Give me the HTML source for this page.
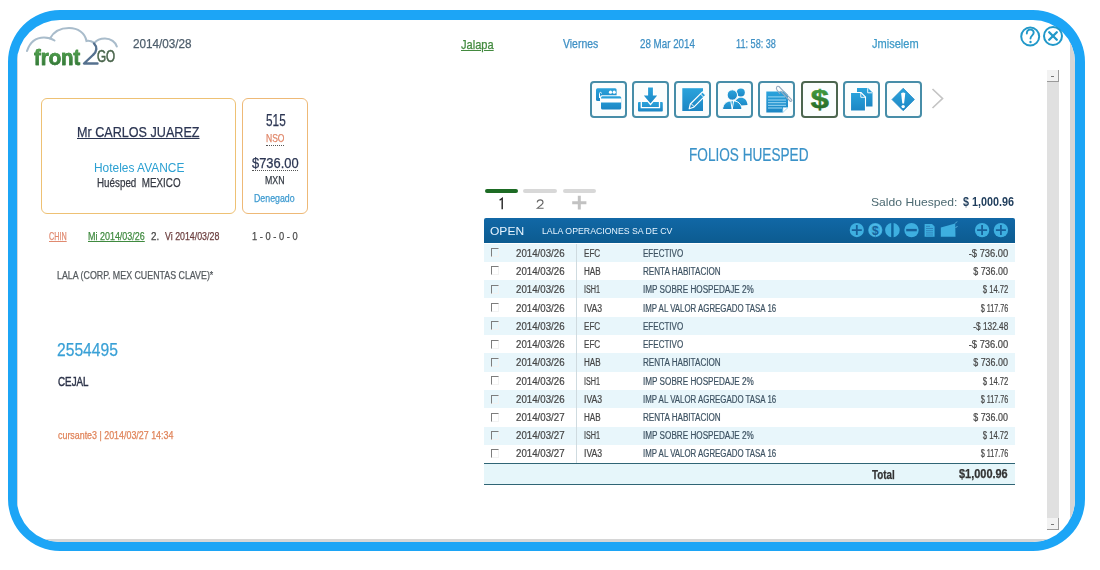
<!DOCTYPE html>
<html><head><meta charset="utf-8"><style>
html,body{margin:0;padding:0;background:#fff;width:1100px;height:570px;overflow:hidden;position:relative;font-family:"Liberation Sans",sans-serif}
.t{position:absolute;white-space:nowrap;line-height:1;transform-origin:0 0;font-family:"Liberation Sans",sans-serif}
.rt{font-size:10.00px;-webkit-text-stroke-width:0.2px}
.d{-webkit-text-stroke-width:0.25px}
.frame{position:absolute;left:7.5px;top:10px;width:1077px;height:541px;box-sizing:border-box;border:10px solid #1ca5f6;border-left-width:9.5px;border-right-width:10.5px;border-bottom-width:9px;border-radius:52px;overflow:hidden;background:#fff}
.inner{position:absolute;left:0;top:0;right:0;bottom:0;border-left:1.5px solid #d5d8dc;border-right:5px solid #d6d6d6;border-bottom:3.5px solid #d6d6d6}
.card{position:absolute;border:1.5px solid #f0b45a;border-radius:6px;box-sizing:border-box;background:#fff}
.btn{position:absolute;top:81px;width:37px;height:37px;box-sizing:border-box;border:2px solid #478da8;border-radius:4px;background:#fbfdfd}
.row{position:absolute;left:484px;width:531px;height:18.3px}
.cb{position:absolute;left:491px;width:8px;height:9px;border-top:1.2px solid #7d7d7d;border-left:1.2px solid #7d7d7d;border-right:1px solid #f2f2f2;border-bottom:1px solid #f2f2f2;box-sizing:border-box}
</style></head><body>
<div class="frame"><div class="inner"></div></div>
<div class="card" style="left:40.8px;top:98px;width:195.2px;height:115.5px;border-color:#eec174"></div>
<div class="card" style="left:242.3px;top:98px;width:65.5px;height:115.5px;border-color:#eeb977"></div>
<div style="position:absolute;left:266px;top:144.8px;width:18px;border-top:1px dotted #555"></div>
<div style="position:absolute;left:252px;top:170.2px;width:46px;border-top:1px dotted #555"></div>
<!-- scrollbar -->
<div style="position:absolute;left:1046.5px;top:70px;width:12.5px;height:459px;background:#e0e0e0"></div>
<div style="position:absolute;left:1046.5px;top:70px;width:12.5px;height:12px;box-sizing:border-box;background:#f2f2f2;border-right:1px solid #9a9a9a;border-bottom:1px solid #9a9a9a"></div>
<div style="position:absolute;left:1046.5px;top:517.5px;width:12.5px;height:12px;box-sizing:border-box;background:#f2f2f2;border-right:1px solid #9a9a9a;border-bottom:1px solid #9a9a9a"></div>
<div style="position:absolute;left:1051px;top:76px;width:3px;height:1px;background:#777"></div>
<div style="position:absolute;left:1051px;top:523.5px;width:3px;height:1px;background:#777"></div>
<!-- tabs -->
<div style="position:absolute;left:484.5px;top:189px;width:33px;height:3.7px;background:#1d6b24;border-radius:2px"></div>
<div style="position:absolute;left:523px;top:189px;width:34px;height:3.7px;background:#d8d8d8;border-radius:2px"></div>
<div style="position:absolute;left:563px;top:189px;width:33px;height:3.7px;background:#d8d8d8;border-radius:2px"></div>
<!-- table header -->
<div style="position:absolute;left:484px;top:217.8px;width:531px;height:25.2px;background:linear-gradient(#1168a6,#0c5b90);border-radius:2px 2px 0 0"></div>
<div class="row" style="top:243.50px;background:#e8f6fb"></div>
<div class="cb" style="top:248.10px"></div>
<div class="t rt" style="left:516.42px;top:248.84px;transform:scaleX(0.970);color:#454545">2014/03/26</div>
<div class="t rt" style="left:584.25px;top:248.84px;transform:scaleX(0.810);color:#454545">EFC</div>
<div class="t rt" style="left:643.16px;top:248.84px;transform:scaleX(0.804);color:#3d5262">EFECTIVO</div>
<div class="t rt" style="right:91.80px;top:248.84px;transform:scaleX(0.935);transform-origin:100% 0;color:#454545">-$ 736.00</div>
<div class="row" style="top:261.80px;background:#ffffff"></div>
<div class="cb" style="top:266.40px"></div>
<div class="t rt" style="left:516.42px;top:267.08px;transform:scaleX(0.970);color:#454545">2014/03/26</div>
<div class="t rt" style="left:584.25px;top:267.08px;transform:scaleX(0.809);color:#454545">HAB</div>
<div class="t rt" style="left:643.15px;top:267.08px;transform:scaleX(0.811);color:#3d5262">RENTA HABITACION</div>
<div class="t rt" style="right:91.80px;top:267.08px;transform:scaleX(0.892);transform-origin:100% 0;color:#454545">$ 736.00</div>
<div class="row" style="top:280.10px;background:#e8f6fb"></div>
<div class="cb" style="top:284.70px"></div>
<div class="t rt" style="left:516.42px;top:285.32px;transform:scaleX(0.970);color:#454545">2014/03/26</div>
<div class="t rt" style="left:584.25px;top:285.32px;transform:scaleX(0.724);color:#454545">ISH1</div>
<div class="t rt" style="left:643.07px;top:285.32px;transform:scaleX(0.815);color:#3d5262">IMP SOBRE HOSPEDAJE 2%</div>
<div class="t rt" style="right:91.80px;top:285.32px;transform:scaleX(0.765);transform-origin:100% 0;color:#454545">$ 14.72</div>
<div class="row" style="top:298.40px;background:#ffffff"></div>
<div class="cb" style="top:303.00px"></div>
<div class="t rt" style="left:516.42px;top:303.56px;transform:scaleX(0.970);color:#454545">2014/03/26</div>
<div class="t rt" style="left:584.12px;top:303.56px;transform:scaleX(0.864);color:#454545">IVA3</div>
<div class="t rt" style="left:643.09px;top:303.56px;transform:scaleX(0.788);color:#3d5262">IMP AL VALOR AGREGADO TASA 16</div>
<div class="t rt" style="right:91.80px;top:303.56px;transform:scaleX(0.721);transform-origin:100% 0;color:#454545">$ 117.76</div>
<div class="row" style="top:316.70px;background:#e8f6fb"></div>
<div class="cb" style="top:321.30px"></div>
<div class="t rt" style="left:516.42px;top:321.80px;transform:scaleX(0.970);color:#454545">2014/03/26</div>
<div class="t rt" style="left:584.25px;top:321.80px;transform:scaleX(0.810);color:#454545">EFC</div>
<div class="t rt" style="left:643.16px;top:321.80px;transform:scaleX(0.804);color:#3d5262">EFECTIVO</div>
<div class="t rt" style="right:91.80px;top:321.80px;transform:scaleX(0.827);transform-origin:100% 0;color:#454545">-$ 132.48</div>
<div class="row" style="top:335.00px;background:#ffffff"></div>
<div class="cb" style="top:339.60px"></div>
<div class="t rt" style="left:516.42px;top:340.04px;transform:scaleX(0.970);color:#454545">2014/03/26</div>
<div class="t rt" style="left:584.25px;top:340.04px;transform:scaleX(0.810);color:#454545">EFC</div>
<div class="t rt" style="left:643.16px;top:340.04px;transform:scaleX(0.804);color:#3d5262">EFECTIVO</div>
<div class="t rt" style="right:91.80px;top:340.04px;transform:scaleX(0.935);transform-origin:100% 0;color:#454545">-$ 736.00</div>
<div class="row" style="top:353.30px;background:#e8f6fb"></div>
<div class="cb" style="top:357.90px"></div>
<div class="t rt" style="left:516.42px;top:358.28px;transform:scaleX(0.970);color:#454545">2014/03/26</div>
<div class="t rt" style="left:584.25px;top:358.28px;transform:scaleX(0.809);color:#454545">HAB</div>
<div class="t rt" style="left:643.15px;top:358.28px;transform:scaleX(0.811);color:#3d5262">RENTA HABITACION</div>
<div class="t rt" style="right:91.80px;top:358.28px;transform:scaleX(0.892);transform-origin:100% 0;color:#454545">$ 736.00</div>
<div class="row" style="top:371.60px;background:#ffffff"></div>
<div class="cb" style="top:376.20px"></div>
<div class="t rt" style="left:516.42px;top:376.52px;transform:scaleX(0.970);color:#454545">2014/03/26</div>
<div class="t rt" style="left:584.25px;top:376.52px;transform:scaleX(0.724);color:#454545">ISH1</div>
<div class="t rt" style="left:643.07px;top:376.52px;transform:scaleX(0.815);color:#3d5262">IMP SOBRE HOSPEDAJE 2%</div>
<div class="t rt" style="right:91.80px;top:376.52px;transform:scaleX(0.765);transform-origin:100% 0;color:#454545">$ 14.72</div>
<div class="row" style="top:389.90px;background:#e8f6fb"></div>
<div class="cb" style="top:394.50px"></div>
<div class="t rt" style="left:516.42px;top:394.76px;transform:scaleX(0.970);color:#454545">2014/03/26</div>
<div class="t rt" style="left:584.12px;top:394.76px;transform:scaleX(0.864);color:#454545">IVA3</div>
<div class="t rt" style="left:643.09px;top:394.76px;transform:scaleX(0.788);color:#3d5262">IMP AL VALOR AGREGADO TASA 16</div>
<div class="t rt" style="right:91.80px;top:394.76px;transform:scaleX(0.721);transform-origin:100% 0;color:#454545">$ 117.76</div>
<div class="row" style="top:408.20px;background:#ffffff"></div>
<div class="cb" style="top:412.80px"></div>
<div class="t rt" style="left:516.42px;top:413.00px;transform:scaleX(0.970);color:#454545">2014/03/27</div>
<div class="t rt" style="left:584.25px;top:413.00px;transform:scaleX(0.809);color:#454545">HAB</div>
<div class="t rt" style="left:643.15px;top:413.00px;transform:scaleX(0.811);color:#3d5262">RENTA HABITACION</div>
<div class="t rt" style="right:91.80px;top:413.00px;transform:scaleX(0.892);transform-origin:100% 0;color:#454545">$ 736.00</div>
<div class="row" style="top:426.50px;background:#e8f6fb"></div>
<div class="cb" style="top:431.10px"></div>
<div class="t rt" style="left:516.42px;top:431.24px;transform:scaleX(0.970);color:#454545">2014/03/27</div>
<div class="t rt" style="left:584.25px;top:431.24px;transform:scaleX(0.724);color:#454545">ISH1</div>
<div class="t rt" style="left:643.07px;top:431.24px;transform:scaleX(0.815);color:#3d5262">IMP SOBRE HOSPEDAJE 2%</div>
<div class="t rt" style="right:91.80px;top:431.24px;transform:scaleX(0.765);transform-origin:100% 0;color:#454545">$ 14.72</div>
<div class="row" style="top:444.80px;background:#ffffff"></div>
<div class="cb" style="top:449.40px"></div>
<div class="t rt" style="left:516.42px;top:449.48px;transform:scaleX(0.970);color:#454545">2014/03/27</div>
<div class="t rt" style="left:584.12px;top:449.48px;transform:scaleX(0.864);color:#454545">IVA3</div>
<div class="t rt" style="left:643.09px;top:449.48px;transform:scaleX(0.788);color:#3d5262">IMP AL VALOR AGREGADO TASA 16</div>
<div class="t rt" style="right:91.80px;top:449.48px;transform:scaleX(0.721);transform-origin:100% 0;color:#454545">$ 117.76</div>
<div style="position:absolute;left:576px;top:243.5px;width:1px;height:219.6px;background:#cfdbe0"></div>
<div style="position:absolute;left:484px;top:462.6px;width:531px;background:#e6f6fa;border-top:1.6px solid #2f6575;border-bottom:1.6px solid #2f6575;box-sizing:border-box;height:22.6px"></div>
<!-- logo -->
<svg style="position:absolute;left:0;top:0" width="130" height="75" viewBox="0 0 130 75">
  <path d="M27,51 C30,42 36,37.5 44,37.5 C48,37.5 51.5,38.5 54.5,40.5" fill="none" stroke="#a9bccb" stroke-width="2.1" stroke-linecap="round"/>
  <path d="M50,38.5 C54,31 61,28 69,28 C78,28 85,33 86.5,41 C88.5,40.5 92,41.5 94.5,43" fill="none" stroke="#a9bccb" stroke-width="2.1" stroke-linecap="round"/>
  <path d="M94.5,43 C97,39.5 101,38.5 105,38.5 C111,38.5 115.5,42 116.8,46.5" fill="none" stroke="#a9bccb" stroke-width="2.1" stroke-linecap="round"/>
  <path d="M94,43.5 C97.5,47 97,51.5 93,55 L84,63.5 L97.5,63.5" fill="none" stroke="#55718f" stroke-width="2.4" stroke-linecap="round" stroke-linejoin="round"/>
</svg>
<!-- help / close -->
<svg style="position:absolute;left:1015px;top:22px" width="54" height="30" viewBox="1015 22 54 30">
  <circle cx="1030.2" cy="36.5" r="9" fill="#fff" stroke="#2198c9" stroke-width="2"/>
  <path d="M1026.8,33.5 C1026.8,30.8 1028.5,29.6 1030.3,29.6 C1032.3,29.6 1033.7,31 1033.7,32.8 C1033.7,35.2 1030.5,35.6 1030.5,38.6" fill="none" stroke="#2198c9" stroke-width="1.9" stroke-linecap="round"/>
  <circle cx="1030.5" cy="42" r="1.2" fill="#2198c9"/>
  <circle cx="1053" cy="36" r="9" fill="#fff" stroke="#2198c9" stroke-width="2"/>
  <path d="M1049.2,32.2 L1056.8,39.8 M1056.8,32.2 L1049.2,39.8" stroke="#2198c9" stroke-width="2.3" stroke-linecap="round"/>
</svg>
<!-- toolbar buttons -->
<div class="btn" style="left:590px"></div>
<div class="btn" style="left:632px"></div>
<div class="btn" style="left:674px"></div>
<div class="btn" style="left:716px"></div>
<div class="btn" style="left:758px"></div>
<div class="btn" style="left:800.5px;border-color:#4c654e"></div>
<div class="btn" style="left:842.5px"></div>
<div class="btn" style="left:884.5px"></div>
<svg style="position:absolute;left:580px;top:75px" width="380" height="50" viewBox="580 75 380 50">
  <defs>
    <linearGradient id="bg1" x1="0" y1="0" x2="0" y2="1"><stop offset="0" stop-color="#2aa3dc"/><stop offset="1" stop-color="#1c86c4"/></linearGradient>
    <linearGradient id="gg1" x1="0" y1="0" x2="0" y2="1"><stop offset="0" stop-color="#4aa845"/><stop offset="1" stop-color="#1f5e22"/></linearGradient>
  </defs>
  <!-- 1 cards -->
  <g transform="translate(590,81)" fill="url(#bg1)">
    <rect x="6" y="7.2" width="20.6" height="12.8" rx="1.5"/>
    <circle cx="20.5" cy="11.2" r="1.6" fill="#fff"/><circle cx="24.2" cy="11.2" r="1.6" fill="#fff"/>
    <path d="M9.5,17 L9.5,12.5 C9.5,11 11.5,11 11.5,12.5" fill="none" stroke="#fff" stroke-width="1"/>
    <rect x="10" y="14.2" width="22.2" height="15.3" rx="2" fill="#fff"/>
    <rect x="11" y="15.2" width="20.2" height="13.3" rx="1.5"/>
    <rect x="11" y="17.5" width="20.2" height="4" fill="#fff"/>
  </g>
  <!-- 2 download -->
  <g transform="translate(632,81)" fill="url(#bg1)">
    <rect x="6" y="21" width="24.8" height="9.5" rx="1"/>
    <path d="M9.3,21 L9.3,26.6 L27.5,26.6 L27.5,21" fill="none" stroke="#fff" stroke-width="1.3"/>
    <path d="M15.5,6 L21.5,6 L21.5,14 L26.5,14 L18.5,23.5 L10.5,14 L15.5,14 Z" stroke="#fff" stroke-width="1.2"/>
  </g>
  <!-- 3 edit -->
  <g transform="translate(674,81)">
    <rect x="8.3" y="7.2" width="20.7" height="22.8" fill="url(#bg1)"/>
    <path d="M15.2,27.8 L16.3,23 L28.5,10.8 L31.8,14.1 L19.6,26.3 Z" fill="url(#bg1)" stroke="#fff" stroke-width="1.2" stroke-linejoin="round"/>
    <path d="M17,22.5 L20.2,25.7 M26.4,12.9 L29.7,16.2" stroke="#fff" stroke-width="1"/>
  </g>
  <!-- 4 people -->
  <g transform="translate(716,81)" fill="url(#bg1)">
    <circle cx="24.8" cy="11.5" r="4"/>
    <path d="M18,25 C19,18.5 22,16.8 25,16.8 C28.5,16.8 31,19 31.5,24 Z"/>
    <circle cx="16.3" cy="14" r="5.2" stroke="#fff" stroke-width="1"/>
    <path d="M6.5,28.5 C7.2,22.5 10.5,19.8 16.2,19.8 C22,19.8 25.3,22.5 26,28.5 Z" stroke="#fff" stroke-width="1"/>
    <path d="M14.8,20 L16.2,28.5 L17.6,20" fill="none" stroke="#fff" stroke-width="1"/>
  </g>
  <!-- 5 doc clip -->
  <g transform="translate(758,81)">
    <path d="M8.3,10.6 L26.5,10.6 L30,14 L30,26.5 L24.8,31.6 L8.3,31.6 Z" fill="url(#bg1)"/>
    <path d="M10,15.9 L27,15.9 M10,19 L28,19 M10,21.7 L28,21.7 M10,24.3 L28,24.3 M10,27 L24,27" stroke="#9fd8f3" stroke-width="1"/>
    <path d="M24.8,31.6 L25,26.5 L30,26.5 Z" fill="#fff" stroke="#9fd8f3" stroke-width="0.6"/>
    <path d="M22,13 L19,9 C17.5,6.5 19,4.5 21,5.5 L33.5,18.5 C34.5,20 33,21 32,20 L22.5,10" fill="none" stroke="#93a9bf" stroke-width="1.1"/>
  </g>
  <!-- 6 dollar -->
  <text x="0" y="0" transform="translate(810.8,108.2) scale(1.25,1)" font-family="Liberation Sans" font-weight="bold" font-size="26" fill="url(#gg1)" stroke="url(#gg1)" stroke-width="0.6">$</text>
  <!-- 7 copy -->
  <g transform="translate(842.5,81)" fill="url(#bg1)">
    <path d="M14.5,7 L25.5,7 L30,11.5 L30,25.5 L14.5,25.5 Z"/>
    <path d="M25.2,7.2 L25.2,11.8 L29.8,11.8" fill="none" stroke="#fff" stroke-width="0.9"/>
    <path d="M8,11.5 L18.5,11.5 L23,16 L23,30 L8,30 Z" stroke="#fff" stroke-width="1.1"/>
    <path d="M18.3,11.8 L18.3,16.3 L22.8,16.3" fill="none" stroke="#fff" stroke-width="0.9"/>
  </g>
  <!-- 8 warning -->
  <g transform="translate(884.5,81)">
    <path d="M18.7,7.3 L29.9,18.5 L18.7,29.7 L7.5,18.5 Z" fill="url(#bg1)" stroke="#1c86c4" stroke-width="0.8" stroke-linejoin="round"/>
    <path d="M16.6,12.2 Q18.7,10.8 20.8,12.2 L19.6,22.6 L17.8,22.6 Z" fill="#fff"/>
    <circle cx="18.7" cy="25.6" r="1.7" fill="#fff"/>
  </g>
  <path d="M932.5,89 L942.5,98.5 L932.5,108" fill="none" stroke="#c4c4c4" stroke-width="1.7"/>
</svg>
<!-- tab labels -->
<svg style="position:absolute;left:490px;top:190px" width="110" height="25" viewBox="490 190 110 25">
  <path d="M499.6,200.3 L502.2,198.3 L502.2,209.3" fill="none" stroke="#222" stroke-width="1.4"/>
  <path d="M537.2,202.3 C537.5,200.6 538.8,199.9 540.2,199.9 C541.9,199.9 543,201 543,202.4 C543,204.4 540.2,205.6 537.2,208.3 L543.6,208.3" fill="none" stroke="#666" stroke-width="1.1"/>
  <path d="M572.2,202.8 L586.4,202.8 M579.3,195.8 L579.3,209.6" stroke="#c2c2c2" stroke-width="3"/>
</svg>
<!-- header icons -->
<svg style="position:absolute;left:840px;top:217px" width="175" height="27" viewBox="840 217 175 27">
  <g fill="#3eafe0">
    <circle cx="856.8" cy="230.1" r="7.1"/>
    <circle cx="875.3" cy="230.1" r="7.1"/>
    <path d="M891.2,222.9 A7.3,7.3 0 0 0 891.2,237.3 Z"/>
    <path d="M893.6,222.9 A7.3,7.3 0 0 1 893.6,237.3 Z"/>
    <circle cx="911.5" cy="230.1" r="7.2"/>
    <circle cx="982.1" cy="230.1" r="7.2"/>
    <circle cx="1000.9" cy="230.1" r="7.2"/>
    <path d="M924.6,224 L932,224 L934.6,226.6 L934.6,236.8 L924.6,236.8 Z"/>
    <path d="M940.8,227.5 L955.2,223.5 L955.5,236.8 L940.8,236.8 Z"/>
  </g>
  <g stroke="#17609a" fill="none">
    <path d="M851.8,230.1 L861.8,230.1 M856.8,225.1 L856.8,235.1" stroke-width="1.8"/>
    <circle cx="875.3" cy="230.1" r="5.6" stroke="#5cc0ea" stroke-width="0.8"/>
    <path d="M906.2,230.1 L916.8,230.1" stroke-width="2.4"/>
    <path d="M977.1,230.1 L987.1,230.1 M982.1,225.1 L982.1,235.1" stroke-width="1.8"/>
    <path d="M995.9,230.1 L1005.9,230.1 M1000.9,225.1 L1000.9,235.1" stroke-width="1.8"/>
    <path d="M926,226.3 L930,226.3 M926,228.5 L933,228.5 M926,230.7 L933,230.7 M926,232.9 L933,232.9 M926,235 L933,235" stroke="#2d7fb8" stroke-width="0.9"/>
    <path d="M955.2,223.5 L957,221.5 M955.5,228 L957.5,226" stroke="#6cc4ea" stroke-width="0.8"/>
  </g>
  <text x="875.3" y="234.6" font-family="Liberation Sans" font-weight="bold" font-size="12" fill="#17609a" text-anchor="middle">$</text>
</svg>

<div class="t" style="left:33.80px;top:47.45px;font-size:22.03px;color:#3f8f3d;font-weight:bold;transform:scaleX(0.922);background:linear-gradient(#5cae55,#2c6a33);-webkit-background-clip:text;background-clip:text;-webkit-text-fill-color:transparent;-webkit-text-stroke:0.6px #3d8a3f;">front</div>
<div class="t" style="left:97.42px;top:48.38px;font-size:16.09px;color:#4a654c;font-weight:normal;transform:scaleX(0.726);-webkit-text-stroke:0.6px #4a654c;">GO</div>
<div class="t d" style="left:132.81px;top:38.15px;font-size:12.46px;color:#4d5d6b;font-weight:normal;transform:scaleX(0.940);">2014/03/28</div>
<div class="t d" style="left:460.89px;top:38.95px;font-size:12.46px;color:#438a3f;font-weight:normal;transform:scaleX(0.890);text-decoration:underline;">Jalapa</div>
<div class="t d" style="left:563.00px;top:37.99px;font-size:12.17px;color:#3d8fc4;font-weight:normal;transform:scaleX(0.860);">Viernes</div>
<div class="t d" style="left:640.11px;top:37.99px;font-size:12.17px;color:#3d8fc4;font-weight:normal;transform:scaleX(0.804);">28 Mar 2014</div>
<div class="t d" style="left:735.96px;top:37.99px;font-size:12.17px;color:#3d8fc4;font-weight:normal;transform:scaleX(0.751);">11: 58: 38</div>
<div class="t d" style="left:871.89px;top:38.13px;font-size:12.61px;color:#3d9ac8;font-weight:normal;transform:scaleX(0.876);">Jmiselem</div>
<div class="t d" style="left:76.79px;top:123.87px;font-size:15.51px;color:#2b3552;font-weight:normal;transform:scaleX(0.813);text-decoration:underline;">Mr CARLOS JUAREZ</div>
<div class="t" style="left:94.24px;top:162.02px;font-size:12.03px;color:#2ba0d2;font-weight:normal;transform:scaleX(0.993);">Hoteles AVANCE</div>
<div class="t d" style="left:96.81px;top:177.49px;font-size:12.17px;color:#363a44;font-weight:normal;transform:scaleX(0.808);">Huésped  MEXICO</div>
<div class="t d" style="left:265.73px;top:111.62px;font-size:17.10px;color:#2b3552;font-weight:normal;transform:scaleX(0.691);">515</div>
<div class="t d" style="left:265.52px;top:133.24px;font-size:10.58px;color:#e0876a;font-weight:normal;transform:scaleX(0.807);">NSO</div>
<div class="t d" style="left:251.87px;top:155.95px;font-size:14.35px;color:#2b3552;font-weight:normal;transform:scaleX(0.898);">$736.00</div>
<div class="t d" style="left:264.90px;top:175.15px;font-size:11.16px;color:#333a44;font-weight:normal;transform:scaleX(0.789);">MXN</div>
<div class="t d" style="left:253.90px;top:193.02px;font-size:10.72px;color:#3d9ad0;font-weight:normal;transform:scaleX(0.821);">Denegado</div>
<div class="t d" style="left:49.04px;top:231.33px;font-size:11.30px;color:#e08a70;font-weight:normal;transform:scaleX(0.641);text-decoration:underline;">CHIN</div>
<div class="t d" style="left:87.68px;top:231.33px;font-size:11.30px;color:#3f8a3f;font-weight:normal;transform:scaleX(0.793);text-decoration:underline;">Mi 2014/03/26</div>
<div class="t d" style="left:151.31px;top:231.33px;font-size:11.30px;color:#444;font-weight:normal;transform:scaleX(0.868);">2.</div>
<div class="t d" style="left:164.60px;top:231.33px;font-size:11.30px;color:#6a3c3c;font-weight:normal;transform:scaleX(0.781);">Vi 2014/03/28</div>
<div class="t d" style="left:251.55px;top:231.33px;font-size:11.30px;color:#4a4a4a;font-weight:normal;transform:scaleX(0.825);">1 - 0 - 0 - 0</div>
<div class="t d" style="left:57.09px;top:270.22px;font-size:10.72px;color:#555a5e;font-weight:normal;transform:scaleX(0.825);">LALA (CORP. MEX CUENTAS CLAVE)*</div>
<div class="t d" style="left:56.62px;top:342.49px;font-size:17.97px;color:#39a0d6;font-weight:normal;transform:scaleX(0.871);">2554495</div>
<div class="t" style="left:57.51px;top:374.77px;font-size:13.62px;color:#2b3248;font-weight:normal;transform:scaleX(0.721);-webkit-text-stroke:0.45px #2b3248;">CEJAL</div>
<div class="t d" style="left:57.64px;top:431.31px;font-size:10.14px;color:#e0845a;font-weight:normal;transform:scaleX(0.877);">cursante3 | 2014/03/27 14:34</div>
<div class="t" style="left:688.91px;top:147.29px;font-size:17.97px;color:#3a92c8;font-weight:normal;transform:scaleX(0.758);-webkit-text-stroke:0.2px #3a92c8;">FOLIOS HUESPED</div>
<div class="t" style="left:870.71px;top:197.09px;font-size:11.59px;color:#4d6a72;font-weight:normal;transform:scaleX(1.049);">Saldo Huesped:</div>
<div class="t" style="left:963.29px;top:195.92px;font-size:12.03px;color:#1f3d5c;font-weight:bold;transform:scaleX(0.899);">$ 1,000.96</div>
<div class="t" style="left:489.52px;top:225.51px;font-size:11.45px;color:#e6f4ff;font-weight:normal;transform:scaleX(1.053);">OPEN</div>
<div class="t" style="left:541.70px;top:225.78px;font-size:9.71px;color:#e6f4ff;font-weight:normal;transform:scaleX(0.902);">LALA OPERACIONES SA DE CV</div>
<div class="t d" style="left:871.90px;top:468.93px;font-size:12.61px;color:#333;font-weight:bold;transform:scaleX(0.780);">Total</div>
<div class="t d" style="left:958.89px;top:468.43px;font-size:12.61px;color:#333;font-weight:bold;transform:scaleX(0.868);">$1,000.96</div>
</body></html>
